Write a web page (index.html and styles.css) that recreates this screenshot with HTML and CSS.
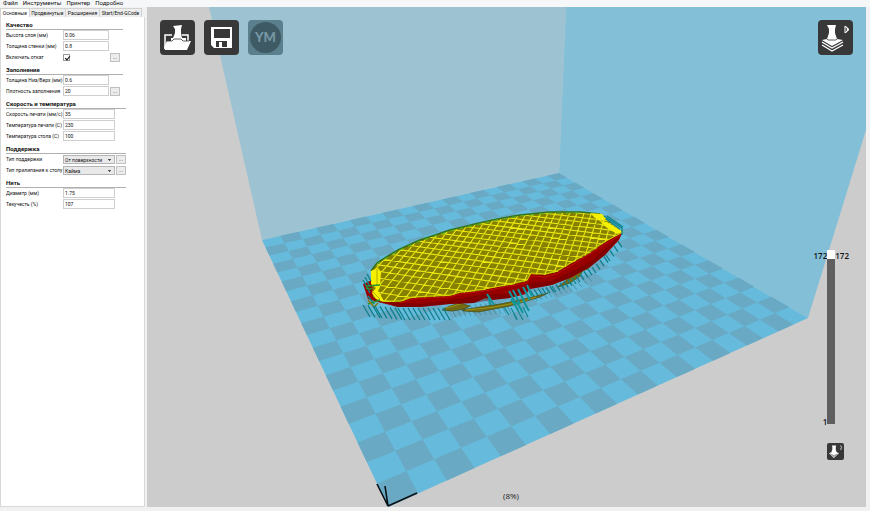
FILE: index.html
```html
<!DOCTYPE html>
<html lang="ru">
<head>
<meta charset="utf-8">
<title>Cura</title>
<link rel="stylesheet" href="styles.css">
</head>
<body>
<nav class="menubar">
  <button>Файл</button><button>Инструменты</button><button>Принтер</button><button>Подробно</button>
</nav>
<main class="workspace">
  <aside class="sidebar">
    <div class="tabs" role="tablist">
      <button class="tab active" role="tab" aria-selected="true">Основные</button><button class="tab" role="tab">Продвинутые</button><button class="tab" role="tab">Расширения</button><button class="tab" role="tab">Start/End-GCode</button>
    </div>
    <form class="panel">
      <section class="group narrow">
        <h2>Качество</h2>
        <div class="row"><label for="layer">Высота слоя (мм)</label><input id="layer" type="text" value="0.06"></div>
        <div class="row"><label for="wall">Толщина стенки (мм)</label><input id="wall" type="text" value="0.8"></div>
        <div class="row"><label for="retract">Включить откат</label><input id="retract" type="checkbox" checked><button type="button" class="more">...</button></div>
      </section>
      <section class="group narrow">
        <h2>Заполнение</h2>
        <div class="row"><label for="bottom">Толщина Низ/Верх (мм)</label><input id="bottom" type="text" value="0.6"></div>
        <div class="row"><label for="density">Плотность заполнения</label><input id="density" type="text" value="20"><button type="button" class="more">...</button></div>
      </section>
      <section class="group">
        <h2>Скорость и температура</h2>
        <div class="row"><label for="speed">Скорость печати (мм/с)</label><input id="speed" type="text" value="35"></div>
        <div class="row"><label for="temp">Температура печати (C)</label><input id="temp" type="text" value="230"></div>
        <div class="row"><label for="bed">Температура стола (C)</label><input id="bed" type="text" value="100"></div>
      </section>
      <section class="group">
        <h2>Поддержка</h2>
        <div class="row"><label for="support">Тип поддержки</label><select id="support"><option>От поверхности</option></select><button type="button" class="more">...</button></div>
        <div class="row"><label for="adhesion">Тип прилипания к столу</label><select id="adhesion"><option>Кайма</option></select><button type="button" class="more">...</button></div>
      </section>
      <section class="group">
        <h2>Нить</h2>
        <div class="row"><label for="diameter">Диаметр (мм)</label><input id="diameter" type="text" value="1.75"></div>
        <div class="row"><label for="flow">Текучесть (%)</label><input id="flow" type="text" value="107"></div>
      </section>
    </form>
  </aside>
  <section class="viewport">
    <svg class="scene" viewBox="147 7 719 500" preserveAspectRatio="xMidYMid slice" aria-hidden="true">
      <defs>
        <clipPath id="topClip"><path d="M371 271L377 263L388 256L400 249L420 240L450 230L475 224L497 219L520 215L550 212L580 212L602 214L607 220L613 225L623 232L613 237L604 243L590 253L572 263L557 272L545 275L531 274L527 281L515 284L505 286L490 288L485 290L470 292L460 293L450 296L430 297L412 298L400 302L382 302L373 297L372 285Z"/></clipPath>
      </defs>
      <path fill="#9dc3d3" d="M209 7H566L559 173L262 240Z"/>
      <path fill="#83c0d8" d="M566 7H866V130L808 318L559 173Z"/>
      <path fill="#66badb" d="M388 507L262 240L559 173L808 318Z"/>
      <path id="checks" fill="#69a9c3"/>
      <path fill="none" stroke="#0a1216" stroke-width="1.6" d="M377 484L388 506L385 486M388 506L417 493"/>
      <path id="shade" fill="none" stroke="#3c7f90" stroke-width=".8" opacity=".8"/>
      <path fill="#746c10" stroke="#454a16" stroke-width=".7" d="M442 310L450 306L460 303L470 306L464 309L452 311ZM462 310L480 307L500 304L520 300L548 293L540 297L510 306L494 309L478 312L464 311Z"/>
      <path fill="none" stroke="#aaa01a" stroke-width=".8" d="M446 308L460 304M466 310L495 307L520 302L536 297"/>
      <path fill="#746c10" stroke="#454a16" stroke-width=".7" d="M558 287L572 276L583 270L580 276L570 283ZM582 267L592 263L588 269L582 271Z"/>
      <path fill="#980000" d="M363 284L372 280L378 300L398 300L460 290L531 272L572 261L623 231L619 240L605 255L590 267L570 278L552 285L530 289L526 294L510 298L492 300L486 298L474 303L450 304L420 307L398 307L378 302L368 299Z"/>
      <path fill="#5f0000" d="M385 302L420 304L450 300L486 294L510 294L531 283L552 281L590 262L620 236L605 255L590 267L570 278L552 285L530 289L510 298L492 300L474 303L450 304L420 307L398 307Z" opacity=".4"/>
      <path fill="#858000" d="M371 271L377 263L388 256L400 249L420 240L450 230L475 224L497 219L520 215L550 212L580 212L602 214L607 220L613 225L623 232L613 237L604 243L590 253L572 263L557 272L545 275L531 274L527 281L515 284L505 286L490 288L485 290L470 292L460 293L450 296L430 297L412 298L400 302L382 302L373 297L372 285Z"/>
      <g clip-path="url(#topClip)"><path id="infill" fill="none" stroke="#ece812" stroke-width="1.1"/></g>
      <path fill="none" stroke="#d8d400" stroke-width="1" d="M623 232L604 242L572 262L557 271L545 274L531 273L527 280L505 285L485 289L460 292L450 295L412 297L400 301L382 301"/>
      <path fill="none" stroke="#c01010" stroke-width=".8" d="M400 303L412 299L450 297L460 294L485 291L505 287L527 283L531 276L545 277L557 274L572 265L604 245L622 234"/>
      <path fill="none" stroke="#35701c" stroke-width="1.6" d="M371 271L377 263L388 256L400 249L420 240L450 230L475 224L497 219L520 215L550 212L580 212L600 214"/>
      <path fill="none" stroke="#55b321" stroke-width="1.1" stroke-dasharray="4 5" d="M377 264L388 257L400 250L420 241L450 231L475 225L497 220L520 216L550 213L580 213"/>
      <path fill="#f5ef00" d="M371 271L378 268L381 272L380 287L378 291L384 301L376 299L372 293L376 288L371 284ZM590 213L602 214L606 219L600 221L595 218ZM600 221L607 222L623 232L617 234L607 228Z"/>
      <path fill="none" stroke="#a39c00" stroke-width=".8" d="M377 269V286M373 292L380 299"/>
      <path fill="none" stroke="#10858b" stroke-width="1.4" d="M363 280L370 293M365 277L370 287M367 274L371 281M604 216L622 228V235M607 216L623 227M606 219L620 229M368 296L374 304"/>
      <path fill="none" stroke="#26932b" stroke-width="1.6" d="M366 286L380 285M366 288L372 289M368 304L380 300"/>
      <path fill="none" stroke="#8b7b12" stroke-width="1.6" d="M368 300L374 307L378 303"/>
      <path id="supports" fill="none" stroke="#107f88" stroke-width="1.3"/>
      <path fill="none" stroke="#12969c" stroke-width="2" d="M509 291L516 304M513 290L520 304M518 289L525 303M523 287L530 300M527 285L532 296M511 299L518 310M517 302L523 313M523 300L529 311M487 294L494 305M489 298L490 305"/>
      <path fill="none" stroke="#12858c" stroke-width="1.2" d="M511 308L517 319M517 309L523 320M523 307L528 317M514 314L517 320M504 307L509 315"/>
    </svg>
    <div class="toolbar">
      <button class="tool" aria-label="Загрузить">
        <svg viewBox="0 0 35 35"><path fill="none" stroke="#fff" stroke-width="1.5" d="M5 29V15H12M22 15H28V22"/><path fill="#fff" d="M13 6L22 5L21 9V13L22 18H26V21H31L27 30H5L4 27L7 21H11V18H13L15 13V9Z"/><path fill="none" stroke="#383838" stroke-width=".8" d="M7 21H12L14 19H21L23 21H29"/></svg>
      </button>
      <button class="tool" aria-label="Сохранить">
        <svg viewBox="0 0 35 35"><path fill="#fff" fill-rule="evenodd" d="M7 7H28V28H10L7 25ZM10 9V18H26V9ZM12 21V27H15V22H18V27H23V21Z"/></svg>
      </button>
      <button class="tool disabled" disabled>
        <span class="round">YM</span>
      </button>
    </div>
    <button class="tool view" aria-label="Режим просмотра">
      <svg viewBox="0 0 35 35"><path fill="#fff" d="M9 5H18L17 9V13L19 19L25 20L14 26L4 20L9 19L11 13V9Z"/><path fill="none" stroke="#fff" stroke-width="1.3" d="M4 22L14 28L25 22M4 25L14 31L25 25"/><path fill="none" stroke="#383838" stroke-width=".8" d="M9 19L10 20H18L19 19"/><path fill="none" stroke="#fff" d="M27 6V13L31 9.500Z"/><path fill="#fff" d="M28 6L31 9.500L28 13L29 9.500Z"/></svg>
    </button>
    <div class="layers">
      <div class="marks"><span>172</span><span>1</span></div>
      <input type="range" min="1" max="172" value="172" aria-label="Слой">
      <span>172</span>
    </div>
    <button class="tool small" aria-label="Слои">
      <svg viewBox="0 0 35 35"><path fill="#fff" d="M10 5H19L18 9V14L20 19L25 21L14 31L4 21L9 19L11 13V8Z"/><path fill="none" stroke="#777" stroke-width="1.500" d="M6 22L14 26L24 22M9 25L14 28L20 25"/><path fill="none" stroke="#ddd" stroke-width="2" d="M28 5Q32 9 28 14"/></svg>
    </button>
    <output class="scale">(8%)</output>
  </section>
</main>
<script src="scene.js"></script>
</body>
</html>
```
FILE: scene.js
```js
// Projective map of the unit square onto the build plate.
var A = [388, 507], D = [808, 318], C = [559, 173], B = [262, 240];
var dx1 = D[0] - C[0], dx2 = B[0] - C[0], sx = A[0] - D[0] + C[0] - B[0];
var dy1 = D[1] - C[1], dy2 = B[1] - C[1], sy = A[1] - D[1] + C[1] - B[1];
var det = dx1 * dy2 - dx2 * dy1;
var g = (sx * dy2 - dx2 * sy) / det, h = (dx1 * sy - sx * dy1) / det;

function project(u, v) {
  var w = g * u + h * v + 1;
  var x = (D[0] - A[0] + g * D[0]) * u + (B[0] - A[0] + h * B[0]) * v + A[0];
  var y = (D[1] - A[1] + g * D[1]) * u + (B[1] - A[1] + h * B[1]) * v + A[1];
  return (x / w).toFixed(2) + ' ' + (y / w).toFixed(2);
}
function draw(id, d) { document.getElementById(id).setAttribute('d', d); }

// Checkerboard of the plate.
var n = 20, d = '', i, j;
for (i = 0; i < n; i++) {
  for (j = i % 2; j < n; j += 2) {
    d += 'M' + project(i / n, j / n) + 'L' + project((i + 1) / n, j / n) +
      'L' + project((i + 1) / n, (j + 1) / n) + 'L' + project(i / n, (j + 1) / n) + 'Z';
  }
}
draw('checks', d);

// Diagonal infill of the printed part.
d = '';
for (var k = -0.98; k < 1; k += 0.03) {
  var a = Math.max(0, k), b = Math.min(1, 1 + k);
  d += 'M' + project(a, a - k) + 'L' + project(b, b - k);
}
for (var s = 0.02; s < 2; s += 0.042) {
  var lo = Math.max(0, s - 1), hi = Math.min(1, s);
  d += 'M' + project(lo, s - lo) + 'L' + project(hi, s - hi);
}
draw('infill', d);

// Support columns hang below the lower rim.
function fringe(points, step, dx, dy) {
  var out = '';
  for (var p = 0; p < points.length - 1; p++) {
    var from = points[p], to = points[p + 1];
    for (var x = from[0]; x < to[0]; x += step) {
      var y = from[1] + (to[1] - from[1]) * (x - from[0]) / (to[0] - from[0]);
      out += 'M' + x + ' ' + y.toFixed(1) + 'l' + dx + ' ' + dy;
    }
  }
  return out;
}
draw('supports',
  fringe([[363, 305], [375, 306], [398, 308], [445, 308]], 5, 7, 12) +
  fringe([[530, 290], [552, 286], [572, 278], [592, 267], [606, 255], [620, 239]], 4, 4, 6));
draw('shade', fringe([[450, 306], [490, 303], [510, 302]], 5, 6, 11) +
  fringe([[530, 292], [570, 281], [588, 271]], 5, 7, 9));
```
FILE: styles.css
```css
* { box-sizing: border-box; }
body {
  margin: 0;
  height: 100vh;
  display: flex;
  flex-direction: column;
  overflow: hidden;
  background: #f1f1f1;
  color: #111;
  font: 5px/8px Roboto, sans-serif;
}
button, input, select { font: inherit; color: inherit; margin: 0; padding: 0; }
button { border: 0; background: none; }

.menubar {
  display: flex;
  gap: 5px;
  height: 7px;
  padding: 0 0 2px 3px;
  background: #f6f7f8;
  align-items: center;
  font-size: 6px;
  line-height: 6px;
}
.workspace { flex: 1; display: flex; min-height: 0; padding: 0 4px 4px 0; }

.sidebar { width: 147px; flex: none; display: flex; flex-direction: column; padding: 1px 2px 0 0; }
.tabs { display: flex; height: 9px; padding-right: 3px; }
.tab {
  flex: auto;
  border: 1px solid #d2d2d2;
  border-width: 1px 1px 0 0;
  background: #eee;
  white-space: nowrap;
  line-height: 7px;
}
.tab.active { background: #fff; border-left-width: 1px; }
.panel {
  flex: 1;
  background: #fff;
  border: 1px solid #d8d8d8;
  border-top: 0;
  padding: 3px 18px 0 5px;
}
.group { margin-bottom: 3px; }
.group h2 {
  margin: 0;
  height: 10px;
  border-bottom: 1px solid #b0b0b0;
  font-size: 6px;
  line-height: 10px;
  white-space: nowrap;
}
.row {
  display: grid;
  grid-template-columns: 57px 52px 11px;
  height: 10px;
  margin-bottom: 1px;
  align-items: center;
}
.narrow h2 { margin-right: 3px; }
.narrow .row { grid-template-columns: 57px 46px 11px; }
.row label { white-space: nowrap; }
.row input[type="text"] {
  width: 100%;
  height: 10px;
  border: 1px solid #cfcfcf;
  padding-left: 1px;
  background: #fff;
}
.row input[type="checkbox"] {
  appearance: none;
  width: 7px;
  height: 7px;
  border: 1px solid #999;
  position: relative;
}
.row input[type="checkbox"]:checked::after {
  content: "";
  position: absolute;
  left: 2px;
  top: 0;
  width: 2px;
  height: 4px;
  border: solid #111;
  border-width: 0 1px 1px 0;
  transform: rotate(40deg);
}
.row select {
  appearance: none;
  height: 9px;
  width: 100%;
  border: 1px solid #b5b5b5;
  border-radius: 0;
  padding-left: 1px;
  background: linear-gradient(45deg, transparent 50%, #555 50%) right 4px top 3px / 2px 2px no-repeat,
    linear-gradient(-45deg, transparent 50%, #555 50%) right 2px top 3px / 2px 2px no-repeat, #e9e9e9;
}
.more {
  height: 9px;
  border: 1px solid #c0c0c0;
  background: #ececec;
  line-height: 5px;
  margin-left: 1px;
}

.viewport { flex: 1; position: relative; background: #ccc; overflow: hidden; min-width: 0; }
.scene { position: absolute; inset: 0; width: 100%; height: 100%; }
.toolbar { position: absolute; left: 13px; top: 13px; display: flex; gap: 9px; }
.tool { display: block; width: 35px; height: 35px; border-radius: 4px; background: #383838; }
.tool svg { display: block; width: 100%; height: 100%; }
.tool.disabled { background: #5b7f8c; padding: 2px; }
.round {
  display: block;
  height: 31px;
  border-radius: 50%;
  background: #3e5a65;
  color: #7797a3;
  font: 900 13px/31px Lato, sans-serif;
  text-align: center;
}
.view { position: absolute; right: 13px; top: 13px; }
.layers {
  position: absolute;
  right: 17px;
  top: 243px;
  display: flex;
  color: #111;
  font: 600 8px/12px "Open Sans", sans-serif;
}
.marks {
  display: flex;
  flex-direction: column;
  justify-content: space-between;
  margin-bottom: -4px;
  text-align: right;
}
.layers input {
  appearance: none;
  writing-mode: vertical-lr;
  direction: rtl;
  width: 8px;
  height: 174px;
  background: #5f5f5f;
}
.layers input::-webkit-slider-thumb { appearance: none; width: 8px; height: 9px; background: #fff; }
.small { position: absolute; right: 22px; bottom: 47px; width: 17px; height: 17px; border-radius: 2px; }
.scale {
  position: absolute;
  left: 0;
  right: 0;
  bottom: 5px;
  padding-left: 9px;
  text-align: center;
  color: #222;
  font: 8px/12px "Open Sans", sans-serif;
}
```
